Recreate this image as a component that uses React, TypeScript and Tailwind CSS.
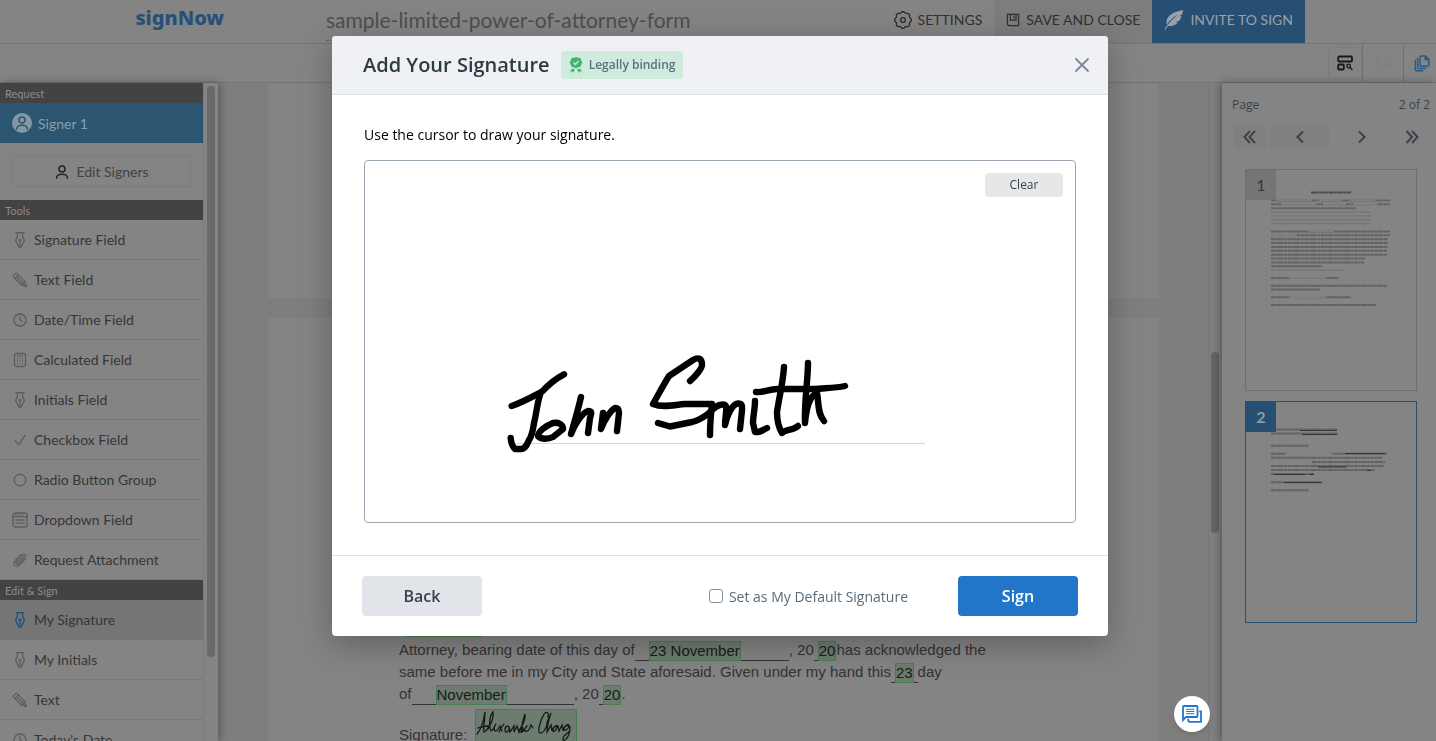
import React, { useState } from 'react';
import clsx from 'clsx';

type IconProps = { className?: string };

const Icon: React.FC<{ className?: string; box?: string; width?: number; children: React.ReactNode }> = ({
    className,
    box = '0 0 16 16',
    width = 1,
    children,
}) => (
    <svg
        viewBox={box}
        className={clsx('shrink-0', className)}
        fill="none"
        stroke="currentColor"
        strokeWidth={width}
        strokeLinecap="round"
        strokeLinejoin="round"
        aria-hidden="true"
    >
        {children}
    </svg>
);

const PenIcon = ({ className }: IconProps) => (
    <Icon className={className}>
        <path d="M4.2.8h7.600" strokeWidth="1.5" />
        <path d="M5.3 2.5v2.3L3.6 8.4 7 15.2h2l3.4-6.8-1.7-3.6V2.5" strokeWidth="1.3" />
        <path d="M8 8.5V15" strokeWidth="1.2" />
        <circle cx="8" cy="8" r="1" fill="currentColor" />
    </Icon>
);

const PencilIcon = ({ className }: IconProps) => (
    <Icon className={className} width={1.2}>
        <path d="M1.5 3.5 3.7 1.4Q4.4 1 5 1.6l7.7 7.8 1.6 5-5-1.4L1.6 5.2Q.9 4.3 1.5 3.5ZM3 6.6l3.4-3.4M4.6 5l7.1 7.2M9.3 13l3.4-3.6" />
        <path d="m12.5 14 1.7.4-.5-1.7z" fill="currentColor" />
    </Icon>
);

const ClockIcon = ({ className }: IconProps) => (
    <Icon className={className}>
        <circle cx="8" cy="8" r="6" strokeWidth="1.3" />
        <path d="M8 4.4V8l2.4 1.5" strokeWidth="1.3" />
    </Icon>
);

const CalcIcon = ({ className }: IconProps) => (
    <Icon className={className}>
        <rect x="2.5" y="1.5" width="11" height="13" rx="1.5" strokeWidth="1.3" />
        <path d="M5 4h6" />
        <path d="M5 6.5h6M5 9h6M5 11.5h6" strokeDasharray="1 1.5" strokeLinecap="butt" strokeWidth="1.3" />
    </Icon>
);

const CheckIcon = ({ className }: IconProps) => (
    <Icon className={className}>
        <path d="m3 8.6 3.8 4L13 3.4" strokeWidth="1.3" />
    </Icon>
);

const RadioIcon = ({ className }: IconProps) => (
    <Icon className={className}>
        <circle cx="8" cy="8" r="5.8" strokeWidth="1.3" />
    </Icon>
);

const ListIcon = ({ className }: IconProps) => (
    <Icon className={className}>
        <rect x="1" y="1" width="14" height="14" rx="2" strokeWidth="1.3" />
        <path d="M1 4.6h14M4 8h8M4 11.2h8" strokeWidth="1.3" />
        <path d="M3 2.8h10" strokeDasharray="1.4 1.2" strokeLinecap="butt" />
    </Icon>
);

const ClipIcon = ({ className }: IconProps) => (
    <Icon className={className}>
        <path
            d="m5 10.6 5.2-4.700c1.100-.9 2 .4 1.100 1.300l-4.400 4.300c-1.900 1.600-4.100-.6-2.600-2.400l4.600-4.700c2.700-2.300 6 .6 3.900 3.300l-5.300 5.300c-3.200 2.700-6.200.6-5.600-2.600.2-1 .9-1.800 1.600-2.500L7.600 3.500c2-1.900 5.400-2.200 6.600.1"
            strokeWidth="1.1"
        />
    </Icon>
);

const PersonIcon = ({ className }: IconProps) => (
    <Icon className={className} width={1.5}>
        <circle cx="8" cy="5" r="3" />
        <path d="M2.500 14.2c0-5.4 11-5.4 11 0" />
    </Icon>
);

const GearIcon = ({ className }: IconProps) => (
    <Icon className={className} box="0 0 18 18" width={1.4}>
        <path d="M7.200 1.500Q9-.2 10.800 1.500q.8 1.400 2.200.9 2.800-.2 2.600 2.600-.5 1.400.9 2.200 1.700 1.800 0 3.600-1.400.8-.9 2.200.2 2.800-2.600 2.600-1.400-.5-2.200.9-1.800 1.700-3.600 0-.8-1.400-2.200-.9-2.800.2-2.600-2.600.5-1.400-.9-2.200-1.700-1.800 0-3.600 1.400-.8.9-2.200-.2-2.800 2.600-2.600 1.400.5 2.200-.9z" />
        <circle cx="9" cy="9" r="2.400" />
    </Icon>
);

const SaveIcon = ({ className }: IconProps) => (
    <Icon className={className} width={1.4}>
        <path d="M1.600 1.600h12.800v12.800H3.200l-1.600-1.600zM5 1.800v6.400h6.500V1.800M9.300 3.500v2.300" strokeLinejoin="miter" />
    </Icon>
);

const FeatherIcon = ({ className }: IconProps) => (
    <svg viewBox="0 0 20 20" className={className} fill="currentColor" aria-hidden="true">
        <path d="M19.3.3C12.8.8 5 4.3 3 9.3c-.7 1.8-.6 3.8-.1 5.2C6 10 10 6.6 14.4 4.3 10.2 7.6 5.8 11.500.4 19.4l1 .4c1-1.6 1.900-2.900 2.900-4 4.3.8 7.5-1 9.6-3.5l-2.600-.2 4.200-1.400c1-1.700 1.600-3.100 2-4.700l-2.100.3 2.700-2.100c.5-1.500.9-2.800 1.200-3.900z" />
    </svg>
);

const LayoutIcon = ({ className }: IconProps) => (
    <Icon className={className} width={1.8}>
        <rect x="1.2" y="1.5" width="13.800" height="5" rx="1" />
        <rect x="1.2" y="9.5" width="5.600" height="5" rx="1" />
        <circle cx="11.600" cy="11" r="1.800" strokeWidth="1.3" />
        <path d="m13 12.500 2 2" strokeWidth="1.4" />
    </Icon>
);

const FormGearIcon = ({ className }: IconProps) => (
    <Icon className={className} width={1.2}>
        <path d="M8 13H2.500Q1 13 1 11.500v-8Q1 2 2.500 2h11Q15 2 15 3.500V6M3.500 4.500h2M4.500 4.500v6M3.500 10.500h2" />
        <circle cx="12" cy="11.300" r="2.400" strokeWidth="1.6" strokeDasharray="1.3 .6" strokeLinecap="butt" />
    </Icon>
);

const PagesIcon = ({ className }: IconProps) => (
    <Icon className={className} box="0 0 16 18" width={1.6}>
        <path d="M7 1h4.600l3.600 3.600v6Q15.200 12 13.800 12H7.200Q6 12 6 10.800V2.200Q6 1 7 1zM11.500 1v3.800h3.700M3.400 3.500v9Q3.400 14.300 5.200 14.300h6.600M1 5.500v9.300Q1 16.800 3 16.800h6" />
    </Icon>
);

const BadgeIcon = ({ className }: IconProps) => (
    <svg viewBox="0 0 14 16" className={className} aria-hidden="true">
        <path
            d="M7 0 9 .8l2.300.3.900 2.100L13.400 5.500l-1.200 2.200-.8 2.200-2.300.4L7 11.500l-2.100-1.200-2.300-.4-.8-2.200L.6 5.500l1.200-2.300.9-2.100L5 .8z"
            fill="#45b175"
        />
        <path d="m4.600 5.600 1.700 1.800 3.300-3.300" fill="none" stroke="#ceebdc" strokeWidth="1.4" />
        <path d="m3.300 11.600 2.500 1-1.700 3.400-1.100-1.700-2.200.2zM10.700 11.600l-2.500 1 1.700 3.400 1.100-1.700 2.200.2z" fill="#45b175" />
    </svg>
);

const ChatIcon = ({ className }: IconProps) => (
    <Icon className={className} box="0 0 20 18" width={1.800}>
        <path d="M1 15V2Q1 1 2 1h12.500q1 0 1 1v9q0 1-1 1H4z" strokeLinejoin="miter" />
        <path d="M18 6.500h1v10.300H7.800q-1.600 0-1.600-2.300" strokeLinejoin="miter" />
        <path d="M4.500 4.300h7.500M4.500 6.500h7.500M4.500 8.700h7.500" strokeWidth="1" />
    </Icon>
);

const Chevrons: React.FC<{ d: string }> = ({ d }) => (
    <Icon className="h-4 w-4" width={2}>
        <path d={d} strokeLinecap="butt" strokeLinejoin="miter" />
    </Icon>
);

const tools = [
    { label: 'Signature Field', icon: PenIcon },
    { label: 'Text Field', icon: PencilIcon },
    { label: 'Date/Time Field', icon: ClockIcon },
    { label: 'Calculated Field', icon: CalcIcon },
    { label: 'Initials Field', icon: PenIcon },
    { label: 'Checkbox Field', icon: CheckIcon },
    { label: 'Radio Button Group', icon: RadioIcon },
    { label: 'Dropdown Field', icon: ListIcon },
    { label: 'Request Attachment', icon: ClipIcon },
];

const signTools = [
    { label: 'My Signature', icon: PenIcon, active: true },
    { label: 'My Initials', icon: PenIcon },
    { label: 'Text', icon: PencilIcon },
    { label: "Today's Date", icon: ClockIcon },
];

const SectionTitle: React.FC<{ children: React.ReactNode }> = ({ children }) => (
    <h2 className="h-5 bg-[#434343] px-[5px] text-[11px] leading-[22px] text-[#8d8d8d]">{children}</h2>
);

const ToolRow: React.FC<{ label: string; icon: React.FC<IconProps>; active?: boolean }> = ({
    label,
    icon: ToolIcon,
    active,
}) => (
    <li className="border-b border-[#797979]">
        <button
            className={clsx(
                'flex h-[39px] w-full items-center gap-1.5 px-3 text-left text-[14px] text-[#363636]',
                active && 'bg-[#757575]'
            )}
        >
            <ToolIcon className={clsx('h-4 w-4', active ? 'text-[#1f5180]' : 'text-[#5c5c5c]')} />
            {label}
        </button>
    </li>
);

const Sidebar = () => (
    <aside className="flex w-[218px] shrink-0 bg-[#848484] shadow-[2px_0_8px_rgba(0,0,0,0.3)]">
        <div className="flex-1 border-r border-[#7c7c7c]">
            <SectionTitle>Request</SectionTitle>
            <button className="flex h-10 w-full items-center gap-1.5 bg-[#2c5572] px-3 text-[14px] text-[#8f9ca5]">
                <span className="flex h-5 w-5 items-center justify-center rounded-full bg-[#8597a4] text-[#2c5572]">
                    <PersonIcon className="h-4 w-4" />
                </span>
                Signer 1
            </button>
            <div className="px-3 py-[13px]">
                <button className="flex h-[31px] w-full items-center justify-center gap-1.5 border border-[#7c7c7c] text-[14px] text-[#414141]">
                    <PersonIcon className="h-4 w-4 text-[#242424]" />
                    Edit Signers
                </button>
            </div>
            <SectionTitle>Tools</SectionTitle>
            <ul>
                {tools.map((t) => (
                    <ToolRow key={t.label} {...t} />
                ))}
            </ul>
            <SectionTitle>Edit &amp; Sign</SectionTitle>
            <ul>
                {signTools.map((t) => (
                    <ToolRow key={t.label} {...t} />
                ))}
            </ul>
        </div>
        <div className="w-[14px] px-[3px] pt-[3px]">
            <div className="h-[571px] w-2 rounded-full bg-[#696969]" />
        </div>
    </aside>
);

const Header = () => (
    <header className="flex h-11 shrink-0 border-b border-[#757575] text-[14px] text-[#303030]">
        <div className="flex w-[326px] shrink-0 justify-end pr-[102px]">
            <a href="#" className="font-['Noto_Sans'] text-[20px] leading-9 font-extrabold text-[#275079]">
                signNow
            </a>
        </div>
        <h1 className="h-[41px] flex-1 border-b border-dashed border-[#666] text-[21px] leading-[40px] text-[#4e4e4e]">
            sample-limited-power-of-attorney-form
        </h1>
        <button className="flex items-center gap-1.5 px-3 pb-1">
            <GearIcon className="h-[18px] w-[18px]" />
            SETTINGS
        </button>
        <button className="flex items-center gap-1.5 bg-[#7d7d7d] px-3 pb-1">
            <SaveIcon className="h-[14px] w-[14px]" />
            SAVE AND CLOSE
        </button>
        <button className="mr-[131px] flex items-center gap-1.5 bg-[#274f74] px-3 pb-1 text-[#99a2aa]">
            <FeatherIcon className="h-5 w-5" />
            INVITE TO SIGN
        </button>
    </header>
);

const Toolbar = () => (
    <div className="flex h-[39px] shrink-0 justify-end border-b border-[#737373]">
        <button
            aria-label="Find fields"
            className="my-[3px] flex w-[34px] items-center justify-center rounded-sm border border-[#7b7b7b] text-[#171717]"
        >
            <LayoutIcon className="h-4 w-4" />
        </button>
        <button
            aria-label="Form options"
            className="flex w-[41px] items-center justify-center border-l border-[#707070] text-[#76818a]"
        >
            <FormGearIcon className="h-4 w-4" />
        </button>
        <button
            aria-label="Pages"
            className="flex w-[33px] items-center justify-end border-l border-[#707070] pr-1.5 text-[#275b87]"
        >
            <PagesIcon className="h-[17px] w-4" />
        </button>
    </div>
);

const Fill: React.FC<{ children: React.ReactNode }> = ({ children }) => (
    <span className="inline-block h-5 border border-[#4a7b53] bg-[#6c7c6f] align-bottom text-[15px] leading-[18px] text-[#1b1b1b]">
        {children}
    </span>
);

const Blank: React.FC<{ className: string }> = ({ className }) => (
    <span className={clsx('inline-block h-5 border-b border-[#333] align-bottom', className)} />
);

const DocumentView = () => (
    <main className="flex min-w-0 flex-1 overflow-hidden bg-[#7e7e7e]">
        <div className="ml-[50px] flex flex-1 flex-col gap-5">
            <div className="h-[215px] shrink-0 bg-[#848484]" />
            <div className="min-h-0 flex-1 bg-[#848484] px-[131px] pt-[299px] font-['Liberation_Sans'] text-[15px] leading-[22px] text-[#333]">
                <div className="h-[22px]">
                    <div className="ml-1.5 h-5 w-[77px] border border-[#4a7b53] bg-[#6c7c6f]" />
                </div>
                <div className="whitespace-nowrap">
                    <p>
                        Attorney, bearing date of this day of
                        <Blank className="w-[14px]" />
                        <Fill>23 November</Fill>
                        <Blank className="w-12" />, 20
                        <Blank className="w-1" />
                        <Fill>20</Fill>
                        has acknowledged the
                    </p>
                    <p>
                        same before me in my City and State aforesaid. Given under my hand this
                        <Blank className="w-1" />
                        <Fill>23</Fill>
                        <Blank className="w-1" />
                        day
                    </p>
                    <p>
                        of
                        <Blank className="w-6" />
                        <Fill>November</Fill>
                        <Blank className="w-[67px]" />, 20
                        <Blank className="w-1" />
                        <Fill>20</Fill>.
                    </p>
                </div>
                <div className="mt-1 flex gap-2">
                    <span className="pt-[15px]">Signature:</span>
                    <span className="h-10 border border-[#4a7b53] bg-[#6c7c6f]">
                        <svg
                            viewBox="0 0 100 31"
                            className="h-[31px] w-[100px]"
                            fill="none"
                            stroke="#171717"
                            strokeWidth="1.3"
                            strokeLinecap="round"
                            role="img"
                            aria-label="Alexander Chang"
                        >
                            <path d="M1 24C5 20 8 8 9 2c0 8-2 14-1 20 2-1 4-3 5-6M2 18c4-1 7-2 10-2" />
                            <path d="M12 19c3-5 6-12 5-17-4 4-4 16-2 19 2 0 4-6 5-7-2 3-3 7 0 7 2-1 3-3 4-5 1 2 1 4 2 5M28 14c-2 3-4 5-5 8M29 20c0-5 5-5 4-1s-4 4-4 1m4-3 1 5 4-6v6l3-6 2 6c2-8 4-5 4-2-1 4-4 2-3 0 2-5 6-10 5-16-2 7-5 14-3 18 3-2 5-7 5-6-3 3-3 7 0 5 2 0 3-3 4-6l2 3" />
                            <path d="M72 7c1-5-2-7-5-1s-6 16-3 17 7-6 7-9c0-4 4-9 4-11-2 6-4 14-4 19l4-7 1 6c1-5 6-7 5-4s-4 7-4 3c0-3 4-5 5-4l1 5 3-6 1 6c1-6 6-8 6-5s-5 6-5 3c0-3 5-5 6-2 0 4-1 10-5 13-2 1-3-1-1-4l6-5" />
                        </svg>
                    </span>
                </div>
            </div>
        </div>
        <div className="w-[50px] shrink-0" />
        <div className="w-[14px] shrink-0 border-l border-[#777] bg-[#808080] px-[2px] pt-[269px]">
            <div className="h-[181px] w-2 rounded-full bg-[#656565]" />
        </div>
    </main>
);

// line widths of the page previews, 0 leaves a gap
const firstPage = [119, 119, 85, 100, 100, 100, 100, 0, 119, 119, 117, 117, 117, 116, 116, 94, 93, 51, 73, 0, 68, 0, 116, 49, 0, 80, 0, 105];
const secondPage = [66, 67, 0, 0, 38, 0, 116, 111, 114, 113, 104, 43, 0, 51, 0, 38];

const Preview: React.FC<{ page: number; lines: number[]; active?: boolean }> = ({ page, lines, active }) => {
    const top = active ? 27.5 : 30.5;
    const step = active ? 4.05 : 3.87;

    return (
        <button
            className={clsx('relative block h-[222px] w-[172px] border', active ? 'border-[#274f74]' : 'border-[#6d6d6d]')}
        >
            <span
                className={clsx(
                    'absolute top-0 left-0 flex h-[30px] w-[30px] items-center justify-center text-[16px]',
                    active ? 'bg-[#274f74] font-bold text-[#8e9aa4]' : 'bg-[#757575] text-[#373737]'
                )}
            >
                {page}
            </span>
            <svg viewBox="0 0 170 220" className="h-full w-full" aria-hidden="true">
                {!active && <path d="M65 22.5h40" stroke="#4a4a4a" strokeWidth="2" strokeDasharray="5 .5 3 .4" />}
                {lines.map((w, i) => {
                    const blank = !active && ((i > 2 && i < 7) || i === 18);
                    return (
                        <path
                            key={i}
                            d={`M25 ${top + i * step}h${w}`}
                            stroke={blank ? '#6c6c6c' : '#626262'}
                            strokeWidth={blank ? 0.8 : 2}
                            strokeDasharray={blank ? undefined : '4 .4 2 .3 6 .5 3 .4'}
                        />
                    );
                })}
                {active ? (
                    <>
                        <path d="M40 51.800h46M25 60h41M47 64h0M54 68h0" stroke="#848484" strokeWidth="2.6" />
                        <path
                            d="M54 28.500h37M56 32.500h35M99 51.500h40M72 65h28M28 72.500h31M63 72.500h5M38 80.500h38M121 68.500h4"
                            stroke="#333"
                        />
                    </>
                ) : (
                    <path
                        d="M31 30.200h35M73 30.200h23M103 30.200h26M35 34h35M77 34h23M107 34h24M63 61.200h25M25 65.200h26M43 107.800h37M43 127h37"
                        stroke="#808080"
                        strokeWidth="1.8"
                    />
                )}
            </svg>
        </button>
    );
};

const PagesPanel = () => (
    <aside className="w-[214px] shrink-0 bg-[#848484] font-['Open_Sans'] text-[12px] text-[#3b424a] shadow-[-2px_0_8px_rgba(0,0,0,0.35)]">
        <div className="flex justify-between pt-[13px] pr-[6px] pl-[10px] leading-[18px]">
            <span>Page</span>
            <span>2 of 2</span>
        </div>
        <div className="flex justify-between pt-[11px] pr-4 pl-3">
            <div className="flex gap-1">
                <button aria-label="First page" className="flex h-6 w-8 items-center justify-center rounded-sm bg-[#808080]">
                    <Chevrons d="M8 2 2.500 8 8 14M13 2 7.500 8l5.500 6" />
                </button>
                <button aria-label="Previous page" className="flex h-6 w-[59px] items-center justify-center rounded-sm bg-[#808080]">
                    <Chevrons d="M11 2.500 5.500 8l5.500 5.500" />
                </button>
            </div>
            <div className="flex gap-[34px]">
                <button aria-label="Next page">
                    <Chevrons d="M5 2.500 10.500 8 5 13.500" />
                </button>
                <button aria-label="Last page">
                    <Chevrons d="M2.500 2 8 8l-5.500 6M8 2l5.500 6L8 14" />
                </button>
            </div>
        </div>
        <div className="flex flex-col gap-[10px] pt-5 pl-[23px] font-[Lato]">
            <Preview page={1} lines={firstPage} />
            <Preview page={2} lines={secondPage} active />
        </div>
    </aside>
);

const Drawing = () => (
    <svg
        viewBox="0 0 420 100"
        className="h-[100px] w-[420px]"
        fill="none"
        stroke="#000"
        strokeWidth="6.4"
        strokeLinecap="round"
        strokeLinejoin="round"
        role="img"
        aria-label="John Smith"
    >
        <path d="M12 89.500h408" stroke="#d5d5d5" strokeWidth="1" />
        <path d="M6.700 52C16 49 27 43 37 37.700 43 31 50 25 59 20.300" />
        <path d="M35 41C32 50 31 62 29 69 28 76 27 82 24 86 22 91 20 95 16 95H10C7 92 6 88 5.700 84" />
        <path d="M48 69C40 72 33 78 33 82c3 4 11 3 15 1l10-8c0-5-5-7-10-6" />
        <path d="M76 43C73 56 68 73 66 80 70 70 77 59 83 57c5 0 3 3 2 7l-2 15" />
        <path d="M98 59 96 75C99 67 105 57 110 54c4 0 4 2 4 5l-2 18" />
        <path d="M185 27C191 22 197 14 197 11 197 4 193 3 188 6L164 22C159 30 152 43 148 50 158 54 168 51 180 50H207C206 59 205 70 205 81" />
        <path d="M153 69 165 72.500 187 68C195 66 200 62 203 60 208 55 212 50 218 50.500c6 0 2 9 2 20.500 2-9 7-21 13-21.500 5 0 4 3 4 7l-2 18.500" />
        <path d="M250 47C250 55 248 62 248 69l2 9c4 1 8-2 12-4" />
        <path d="M279 13C278 29 274 44 272 58 272 65 274 74 277 79 281 75 287 77 293 72M251 38C258 39 264 35 272 35H310C321 34 331 34 340 32" />
        <path d="M303 9C303 26 299 49 300 69 301 58 304 42 312 39c2 9 0 20 7 28" />
    </svg>
);

const SignatureDialog = () => {
    const [isDefault, setIsDefault] = useState(false);
    const [drawn, setDrawn] = useState(true);

    return (
        <div className="fixed inset-0 flex items-start justify-center px-4 pt-9">
            <section
                role="dialog"
                aria-labelledby="dialog-title"
                className="ml-1 w-full max-w-[776px] overflow-hidden rounded bg-white font-['Open_Sans'] shadow-[0_8px_32px_rgba(0,0,0,0.28)]"
            >
                <header className="flex h-[59px] items-center border-b border-[#dfe2e5] bg-[#eff1f4] pr-[18px] pl-[31px]">
                    <h2 id="dialog-title" className="text-[20px] font-semibold text-[#2e3a43]">
                        Add Your Signature
                    </h2>
                    <span className="ml-[11px] flex h-7 items-center gap-1.5 rounded bg-[#ceebdc] px-2 text-[12px] font-semibold text-[#5d7080]">
                        <BadgeIcon className="h-4 w-[14px]" />
                        Legally binding
                    </span>
                    <button aria-label="Close" className="ml-auto text-[#77899a]">
                        <Icon className="h-4 w-4" width={1.800}>
                            <path d="m2 2 12 12M14 2 2 14" />
                        </Icon>
                    </button>
                </header>
                <div className="px-8 pt-[30px] pb-8">
                    <p className="text-[14px] leading-5 text-black">Use the cursor to draw your signature.</p>
                    <div className="mt-[15px] h-[363px] rounded border border-[#9ba8b3] p-3">
                        <div className="flex justify-end">
                            <button
                                onClick={() => setDrawn(false)}
                                className="h-6 w-[78px] rounded-sm bg-[#e6e7e8] text-[12px] text-[#3b3f44]"
                            >
                                Clear
                            </button>
                        </div>
                        <div className="mt-[157px] ml-[128px]">{drawn && <Drawing />}</div>
                    </div>
                </div>
                <footer className="flex h-[81px] items-center border-t border-[#dfe2e5] px-[30px]">
                    <button className="h-10 w-[120px] rounded-sm bg-[#e1e5e9] text-[16px] font-semibold text-[#36424d]">
                        Back
                    </button>
                    <label className="mr-[50px] ml-auto flex items-center gap-1.5 text-[14px] text-[#5a6b7a]">
                        <input
                            type="checkbox"
                            checked={isDefault}
                            onChange={(e) => setIsDefault(e.target.checked)}
                            className="h-[14px] w-[14px] appearance-none rounded-[3px] border border-[#82909c] checked:bg-[#2276c9]"
                        />
                        Set as My Default Signature
                    </label>
                    <button className="h-10 w-[120px] rounded-sm bg-[#2276c9] text-[16px] font-semibold text-white">
                        Sign
                    </button>
                </footer>
            </section>
        </div>
    );
};

const App: React.FC = () => (
    <div className="flex h-screen flex-col overflow-hidden bg-[#848484] font-[Lato]">
        <Header />
        <Toolbar />
        <div className="flex min-h-0 flex-1">
            <div className="z-10 flex">
                <Sidebar />
            </div>
            <DocumentView />
            <div className="z-10 flex">
                <PagesPanel />
            </div>
        </div>
        <div className="relative z-20">
            <SignatureDialog />
            <button
                aria-label="Open chat"
                className="fixed right-[226px] bottom-[9px] flex h-9 w-9 items-center justify-center rounded-full bg-white text-[#2276d2] shadow-md"
            >
                <ChatIcon className="h-[18px] w-5" />
            </button>
        </div>
    </div>
);

export default App;
